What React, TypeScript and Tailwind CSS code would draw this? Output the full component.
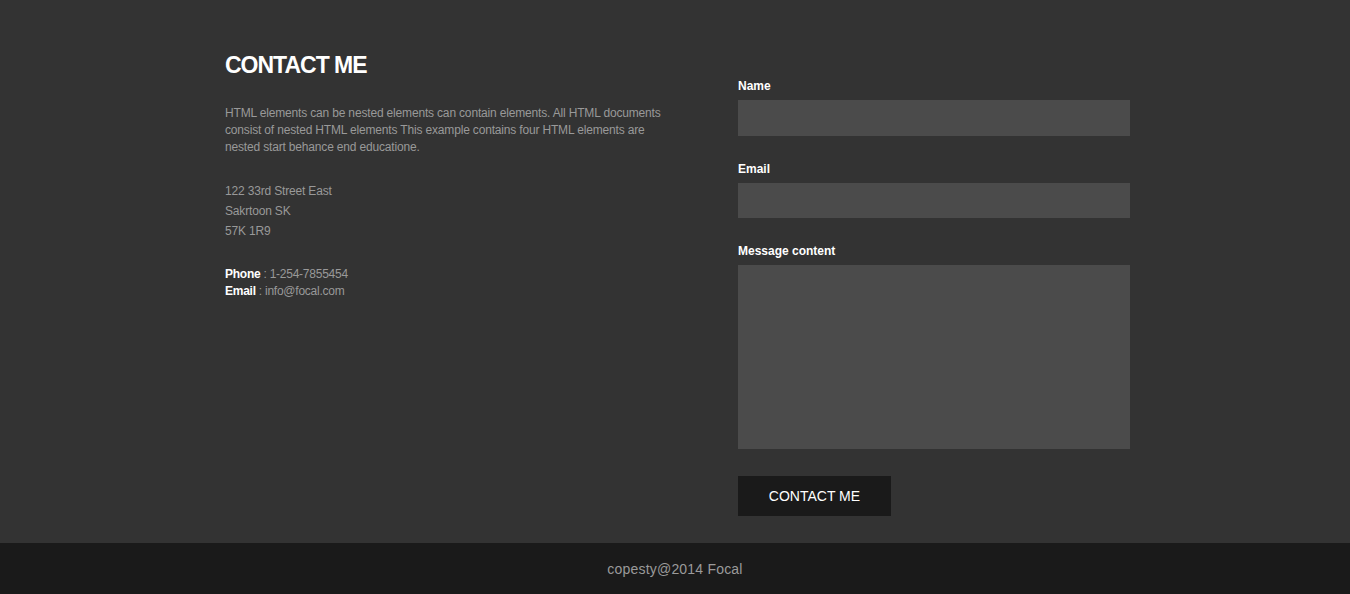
import React from "react";

export default function App() {
  return (
    <div className="w-full min-h-[594px] bg-[#333333]" style={{ fontFamily: '"Liberation Sans", Arial, sans-serif' }}>
      <section className="h-[543px] bg-[#333333]">
        <div className="flex pl-[225px] pt-[52px]">
          <div className="w-[460px]">
            <h2 className="text-[23px] leading-[26px] font-bold text-white tracking-[-1px]">CONTACT ME</h2>
            <p className="mt-[27px] w-[450px] text-[12px] leading-[17px] tracking-[-0.17px] text-[#999999]">
              HTML elements can be nested elements can contain elements. All HTML documents consist of nested HTML elements This example contains four HTML elements are nested start behance end educatione.
            </p>
            <div className="mt-[25px] text-[12px] leading-[20px] tracking-[-0.17px] text-[#999999]">
              <div>122 33rd Street East</div>
              <div>Sakrtoon SK</div>
              <div>57K 1R9</div>
            </div>
            <div className="mt-[25px] text-[12px] leading-[17px] tracking-[-0.25px] text-[#999999]">
              <div>
                <span className="font-bold text-white">Phone</span> : 1-254-7855454
              </div>
              <div>
                <span className="font-bold text-white">Email</span> : info@focal.com
              </div>
            </div>
          </div>
          <form className="ml-[53px] w-[392px] pt-[26px] flex flex-col" onSubmit={(e) => e.preventDefault()}>
            <label className="text-[12px] leading-[17px] font-bold text-white">Name</label>
            <input className="mt-[5px] h-[36px] w-full bg-[#4b4b4b] outline-none border-0" />
            <label className="mt-[25px] text-[12px] leading-[17px] font-bold text-white">Email</label>
            <input className="mt-[5px] h-[35px] w-full bg-[#4b4b4b] outline-none border-0" />
            <label className="mt-[25px] text-[12px] leading-[17px] font-bold text-white">Message content</label>
            <textarea className="mt-[5px] h-[184px] w-full bg-[#4b4b4b] outline-none border-0 resize-none" />
            <div className="mt-[27px]">
              <button type="submit" className="h-[40px] w-[153px] bg-[#1a1a1a] text-white text-[14px]">CONTACT ME</button>
            </div>
          </form>
        </div>
      </section>
      <footer className="h-[51px] bg-[#1a1a1a] flex items-center justify-center pt-[1px]">
        <span className="text-[14px] text-[#9a9a9a] tracking-[0.2px]">copesty@2014 Focal</span>
      </footer>
    </div>
  );
}
